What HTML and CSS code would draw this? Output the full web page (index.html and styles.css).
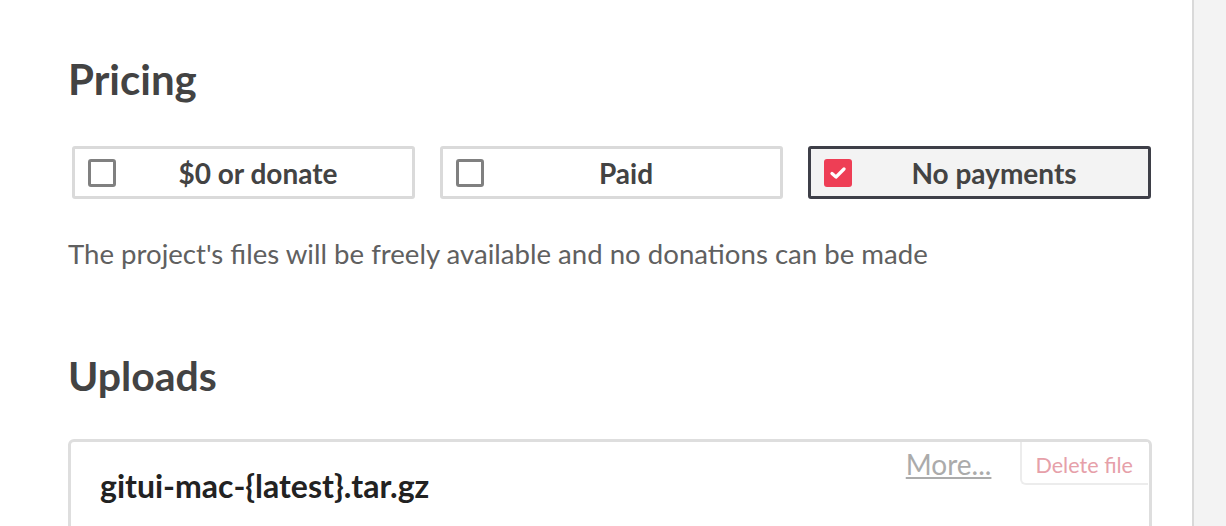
FILE: index.html
```html
<!DOCTYPE html>
<html lang="en">
<head>
  <meta charset="UTF-8">
  <title>Edit project</title>
  <link rel="stylesheet" href="styles.css">
</head>
<body>
  <div class="layout">
    <div class="main">
      <h2>Pricing</h2>
      <div class="pricing">
        <label class="option">
          <span class="box"></span>
          <span class="label">$0 or donate</span>
        </label>
        <label class="option">
          <span class="box"></span>
          <span class="label">Paid</span>
        </label>
        <label class="option selected">
          <span class="box checked">
            <svg width="16" height="14" viewBox="0 0 16 14"><path d="M2 7.5 L6 11 L14 3" fill="none" stroke="#fff" stroke-width="3.2" stroke-linecap="round" stroke-linejoin="round"/></svg>
          </span>
          <span class="label">No payments</span>
        </label>
      </div>
      <p class="hint">The project's files will be freely available and no donations can be made</p>

      <h2 class="uploads-title">Uploads</h2>
      <div class="upload">
        <div class="upload-name">gitui-mac-{latest}.tar.gz</div>
        <div class="upload-tools">
          <a href="#" class="more">More...</a>
          <button class="delete">Delete file</button>
        </div>
      </div>
    </div>
    <div class="sidebar"></div>
  </div>
</body>
</html>
```

FILE: styles.css
```css
body {
  margin: 0;
  font-family: Lato, "Open Sans", sans-serif;
  color: #434343;
  background: #fff;
}
.layout {
  display: flex;
  height: 526px;
  overflow: hidden;
}
.main {
  width: 1124px;
  padding: 54px 0 0 68px;
}
.sidebar {
  flex: 1;
  background: #f3f3f3;
  border-left: 2px solid #d9d9d9;
}
h2 {
  margin: 0;
  font-size: 42px;
  line-height: 1.2;
  font-weight: 700;
  color: #434343;
}
.pricing {
  display: flex;
  gap: 25px;
  margin: 42px 0 0 4px;
}
.option {
  display: flex;
  align-items: center;
  width: 343px;
  height: 53px;
  box-sizing: border-box;
  padding: 0 12px 0 13px;
  border: 3px solid #dadada;
  border-radius: 3px;
  cursor: pointer;
}
.option.selected {
  border-color: #3e3f48;
  background: #f3f3f3;
}
.box {
  width: 28px;
  height: 28px;
  box-sizing: border-box;
  border: 3px solid #808080;
  border-radius: 3px;
  display: flex;
  align-items: center;
  justify-content: center;
}
.box.checked {
  border: none;
  background: #ee3e55;
}
.label {
  flex: 1;
  text-align: center;
  font-size: 28px;
  font-weight: 700;
  color: #434343;
}
.hint {
  margin: 38px 0 0;
  font-size: 27.6px;
  color: #606060;
}
.uploads-title {
  margin-top: 81px;
  font-size: 41px;
}
.upload {
  position: relative;
  margin-top: 38px;
  width: 1084px;
  height: 120px;
  box-sizing: border-box;
  border: 3px solid #dedede;
  border-radius: 6px;
  padding: 24px 0 0 29px;
}
.upload-name {
  font-size: 32px;
  font-weight: 700;
  color: #222;
}
.upload-tools {
  position: absolute;
  top: 0;
  right: 1px;
  display: flex;
  align-items: flex-start;
}
.more {
  font-size: 28px;
  color: #ababab;
  margin-right: 29px;
  margin-top: 5px;
}
.delete {
  font-family: inherit;
  font-size: 21.6px;
  line-height: 1.2;
  color: #e6a0a9;
  background: #fff;
  border: 2px solid #ececec;
  border-top: none;
  border-right: none;
  border-radius: 0 0 0 6px;
  padding: 11px 15px 5px 13px;
}
```
